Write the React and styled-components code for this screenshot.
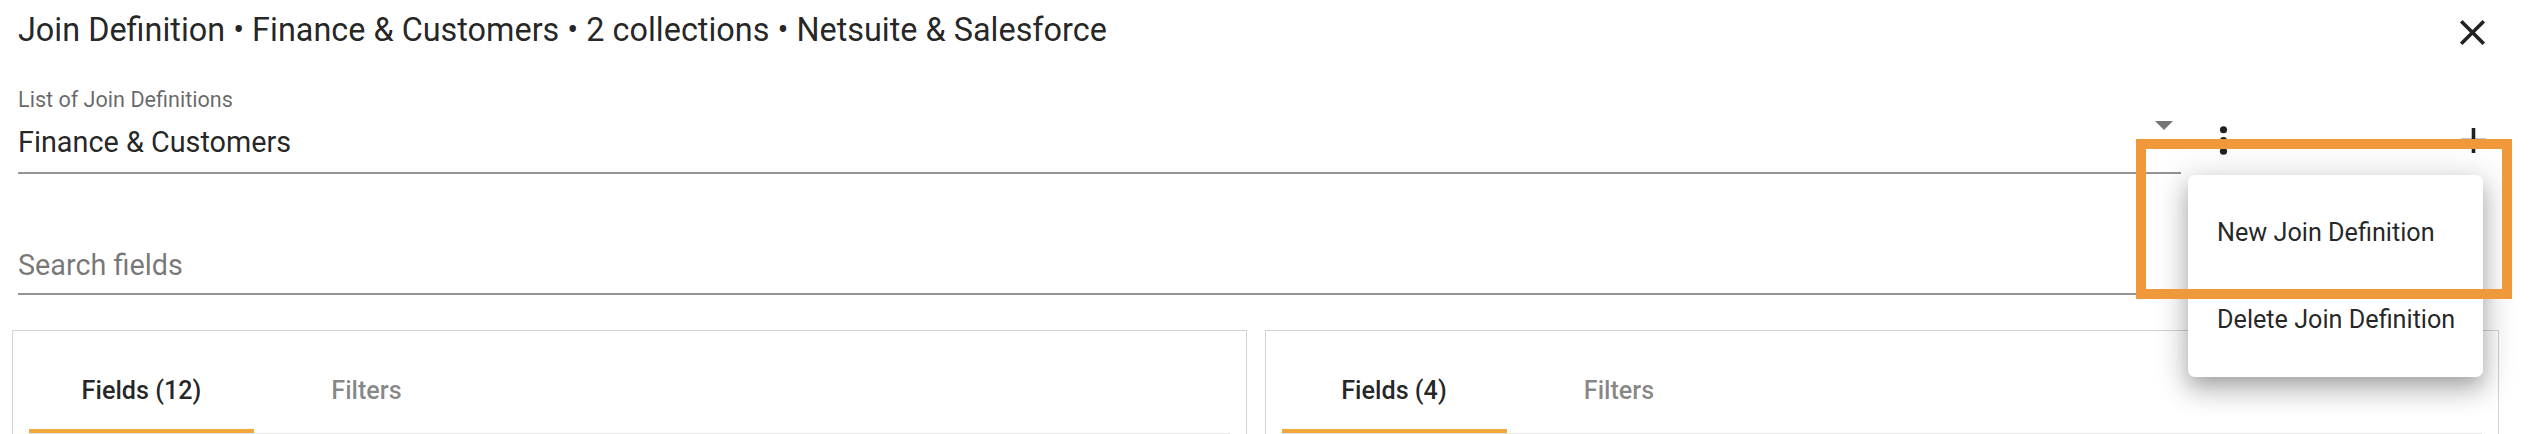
import styled, { createGlobalStyle } from 'styled-components';

const GlobalStyle = createGlobalStyle`
   html, body {
      margin: 0;
      padding: 0;
      background: #ffffff;
   }
   body {
      font-family: Roboto, 'Noto Sans', 'Liberation Sans', sans-serif;
      color: rgba(0, 0, 0, 0.87);
      overflow: hidden;
   }
`;

const Page = styled.div`
   position: relative;
   width: 2532px;
   height: 434px;
   padding: 0 33px 0 12px;
   box-sizing: border-box;
   overflow: hidden;
`;

const TitleRow = styled.div`
   display: flex;
   align-items: center;
   height: 60px;
   padding-left: 6px;
`;

const Title = styled.h2`
   flex: 1;
   margin: 0;
   font-size: 32.4px;
   font-weight: 400;
   line-height: 60px;
   color: rgba(0, 0, 0, 0.87);
   white-space: nowrap;
`;

const IconButton = styled.span`
   display: flex;
   align-items: center;
   justify-content: center;
   width: 43px;
   height: 43px;
   flex: none;
   color: rgba(0, 0, 0, 0.87);
   margin-top: ${(p) => p.$top || 0}px;
   margin-left: ${(p) => p.$left || 0}px;
   margin-right: ${(p) => p.$right || 0}px;
   & svg {
      width: 43px;
      height: 43px;
      fill: currentColor;
   }
`;

const SelectRow = styled.div`
   display: flex;
   align-items: flex-start;
   margin-top: 28px;
   padding-left: 6px;
`;

const Field = styled.div`
   position: relative;
   flex: 1;
   border-bottom: 2px solid rgba(0, 0, 0, 0.42);
   padding-bottom: ${(p) => p.$pad}px;
`;

const Label = styled.div`
   font-size: 21.6px;
   line-height: 24px;
   color: rgba(0, 0, 0, 0.6);
   margin-bottom: 10px;
`;

const Value = styled.div`
   font-size: 28.8px;
   line-height: 40px;
   color: ${(p) => (p.$placeholder ? 'rgba(0, 0, 0, 0.54)' : 'rgba(0, 0, 0, 0.87)')};
`;

const Arrow = styled.span`
   position: absolute;
   right: 8px;
   top: 33px;
   width: 0;
   height: 0;
   border-left: 9px solid transparent;
   border-right: 9px solid transparent;
   border-top: 9px solid #757575;
`;

const SearchRow = styled.div`
   display: flex;
   margin-top: 71px;
   padding-left: 6px;
   width: 2163px;
`;

const Panels = styled.div`
   display: grid;
   grid-template-columns: 1fr 1fr;
   column-gap: 18px;
   margin-top: 35px;
`;

const Panel = styled.div`
   border: 1px solid #d4d4d4;
   border-bottom: none;
   padding: 16px 16px 0;
   height: 140px;
`;

const TabList = styled.div`
   display: flex;
   border-bottom: 2px solid #e6e6e6;
`;

const Tab = styled.div`
   position: relative;
   width: 225px;
   height: 86px;
   display: flex;
   align-items: center;
   justify-content: center;
   font-size: 25.2px;
   font-weight: 500;
   color: ${(p) => (p.$active ? 'rgba(0, 0, 0, 0.87)' : 'rgba(0, 0, 0, 0.48)')};
   &::after {
      content: '';
      display: ${(p) => (p.$active ? 'block' : 'none')};
      position: absolute;
      left: 0;
      right: 0;
      bottom: 0;
      height: 4px;
      background: #f2a93b;
   }
`;

const Highlight = styled.div`
   position: absolute;
   left: 2136px;
   top: 139px;
   width: 376px;
   height: 160px;
   box-sizing: border-box;
   border: 10px solid #f0993a;
   z-index: 2;
`;

const Menu = styled.ul`
   position: absolute;
   left: 2188px;
   top: 175px;
   width: 295px;
   margin: 0;
   padding: 14px 0;
   list-style: none;
   background: #ffffff;
   border-radius: 7px;
   box-shadow: 0px 8px 18px -5px rgba(0, 0, 0, 0.2), 0px 14px 26px 2px rgba(0, 0, 0, 0.14),
      0px 5px 32px 7px rgba(0, 0, 0, 0.12);
   z-index: 1;
`;

const MenuItem = styled.li`
   height: 87px;
   display: flex;
   align-items: center;
   padding: 0 29px;
   font-size: 25.2px;
   color: rgba(0, 0, 0, 0.87);
   white-space: nowrap;
`;

const CloseIcon = () => (
   <svg viewBox="0 0 24 24">
      <path d="M19 6.41 17.59 5 12 10.59 6.41 5 5 6.41 10.59 12 5 17.59 6.41 19 12 13.41 17.59 19 19 17.59 13.41 12z" />
   </svg>
);

const MoreIcon = () => (
   <svg viewBox="0 0 24 24">
      <circle cx="12" cy="6" r="2" />
      <circle cx="12" cy="12" r="2" />
      <circle cx="12" cy="18" r="2" />
   </svg>
);

const AddIcon = () => (
   <svg viewBox="0 0 24 24">
      <path d="M19 13h-6v6h-2v-6H5v-2h6V5h2v6h6v2z" />
   </svg>
);

const panels = [
   { id: 'finance', fields: 12 },
   { id: 'customers', fields: 4 },
];

function App() {
   return (
      <>
         <GlobalStyle />
         <Page>
            <TitleRow>
               <Title>
                  Join Definition • Finance &amp; Customers • 2 collections • Netsuite &amp; Salesforce
               </Title>
               <IconButton $top={4} $right={5}>
                  <CloseIcon />
               </IconButton>
            </TitleRow>

            <SelectRow>
               <Field $pad={10}>
                  <Label>List of Join Definitions</Label>
                  <Value>Finance &amp; Customers</Value>
                  <Arrow />
               </Field>
               <IconButton $top={31} $left={21} $right={207}>
                  <MoreIcon />
               </IconButton>
               <IconButton $top={31} $right={4}>
                  <AddIcon />
               </IconButton>
            </SelectRow>

            <SearchRow>
               <Field $pad={8}>
                  <Value $placeholder>Search fields</Value>
               </Field>
            </SearchRow>

            <Panels>
               {panels.map((p) => (
                  <Panel key={p.id}>
                     <TabList>
                        <Tab $active>Fields ({p.fields})</Tab>
                        <Tab>Filters</Tab>
                     </TabList>
                  </Panel>
               ))}
            </Panels>

            <Highlight />
            <Menu>
               <MenuItem>New Join Definition</MenuItem>
               <MenuItem>Delete Join Definition</MenuItem>
            </Menu>
         </Page>
      </>
   );
}

export default App;
